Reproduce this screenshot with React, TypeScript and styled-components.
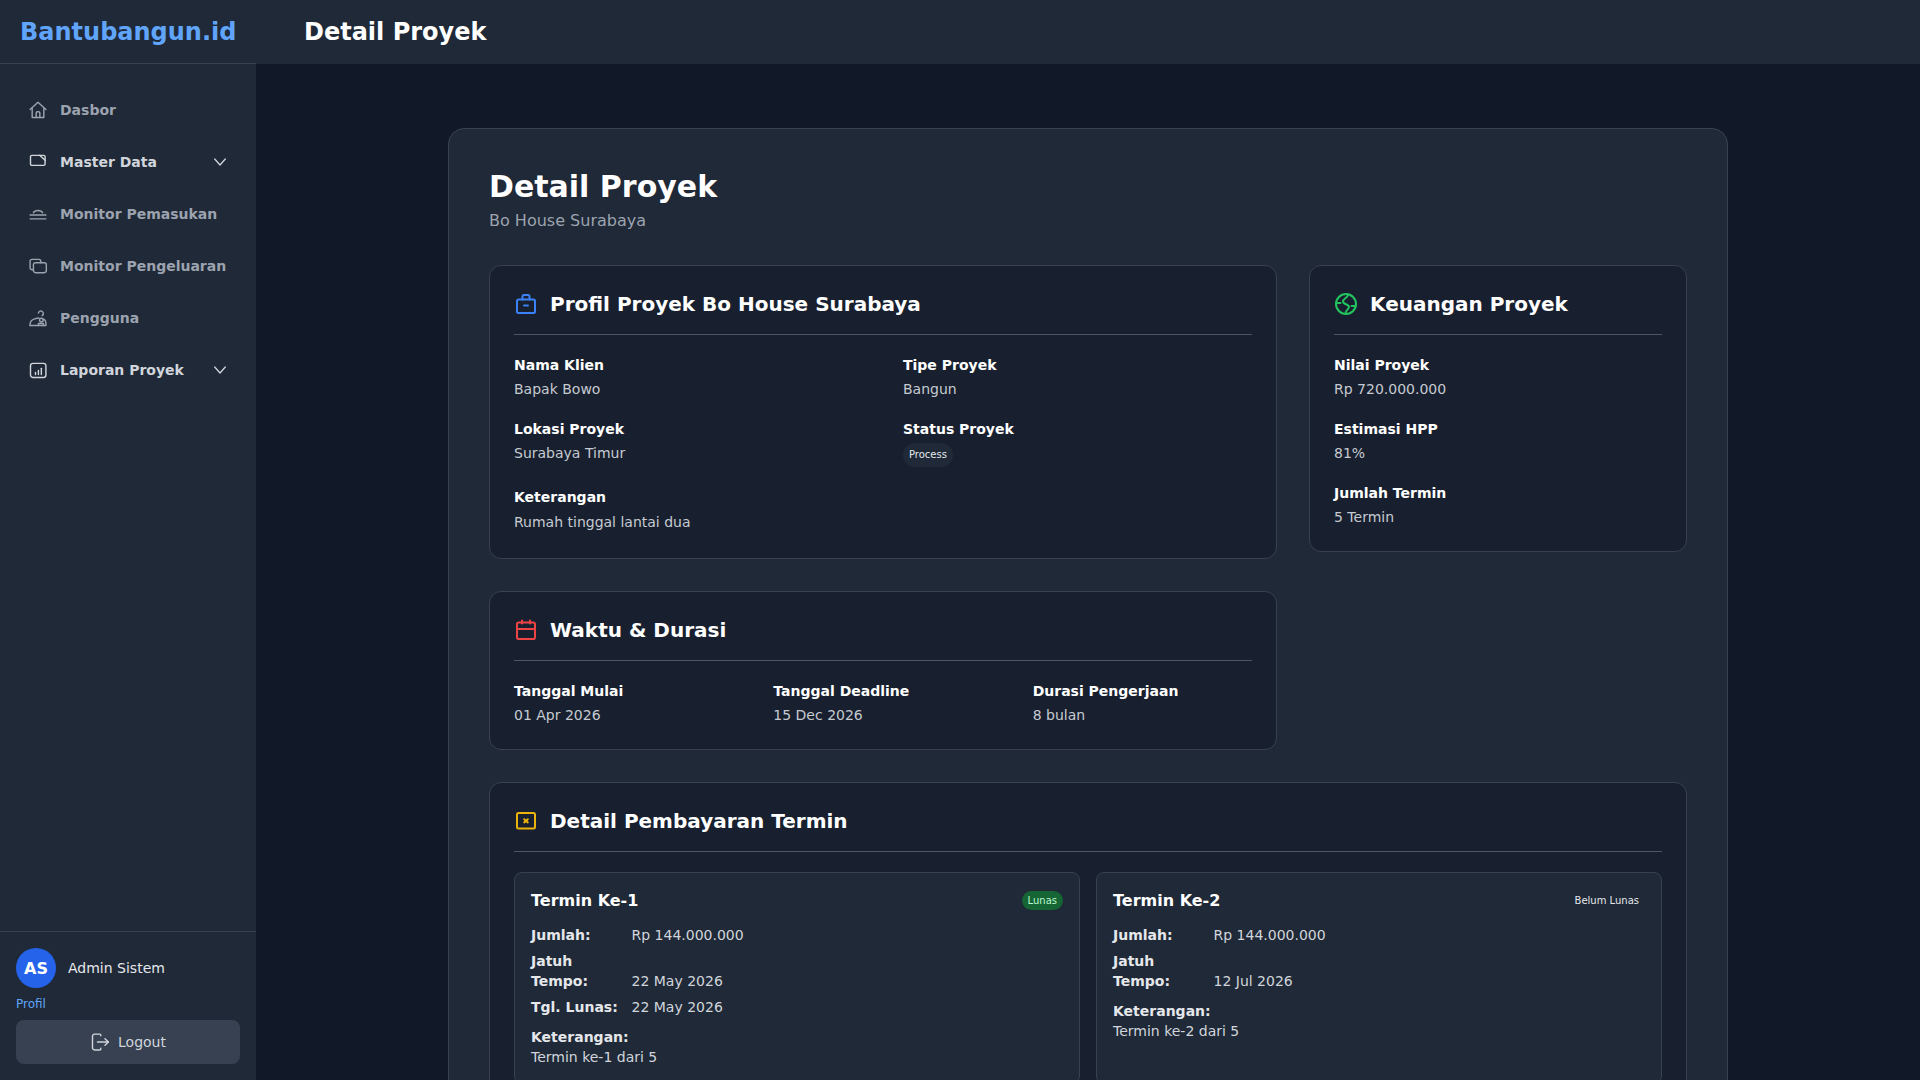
// App.tsx
import React from 'react';
import styled, { createGlobalStyle } from 'styled-components';

const GlobalStyle = createGlobalStyle`
  html, body, #root {
    margin: 0;
    padding: 0;
    height: 100%;
  }
  body {
    background: #111827;
    font-family: "DejaVu Sans", "Liberation Sans", sans-serif;
    overflow: hidden;
  }
  * {
    box-sizing: border-box;
  }
`;

const Shell = styled.div`
  display: flex;
  height: 100vh;
  overflow: hidden;
`;

const Sidebar = styled.aside`
  width: 256px;
  flex-shrink: 0;
  display: flex;
  flex-direction: column;
  background: #1f2937;
`;

const Brand = styled.div`
  height: 64px;
  display: flex;
  align-items: center;
  padding: 0 20px;
  border-bottom: 1px solid #374151;
  color: #60a5fa;
  font-size: 24px;
  font-weight: 700;
`;

const Nav = styled.nav`
  flex: 1;
  display: flex;
  flex-direction: column;
  gap: 8px;
  padding: 24px 16px;
`;

const NavItem = styled.a<{ $open?: boolean }>`
  height: 44px;
  display: flex;
  align-items: center;
  gap: 12px;
  padding: 0 12px;
  border-radius: 8px;
  color: ${(p) => (p.$open ? '#d1d5db' : '#9ca3af')};
  font-size: 14px;
  font-weight: 600;
`;

const NavLabel = styled.span`
  flex: 1;
  white-space: nowrap;
`;

const Glyph = styled.svg<{ $size?: number; $color?: string; $weight?: number }>`
  width: ${(p) => p.$size ?? 20}px;
  height: ${(p) => p.$size ?? 20}px;
  flex-shrink: 0;
  fill: none;
  stroke: ${(p) => p.$color ?? 'currentColor'};
  stroke-width: ${(p) => p.$weight ?? 1.7};
  stroke-linecap: round;
  stroke-linejoin: round;
`;

const UserPanel = styled.div`
  border-top: 1px solid #374151;
  padding: 16px;
`;

const UserRow = styled.div`
  display: flex;
  align-items: center;
  gap: 12px;
`;

const Avatar = styled.div`
  width: 40px;
  height: 40px;
  border-radius: 50%;
  display: flex;
  align-items: center;
  justify-content: center;
  background: #2563eb;
  color: #fff;
  font-size: 16px;
  font-weight: 700;
`;

const UserName = styled.span`
  color: #e5e7eb;
  font-size: 14px;
`;

const ProfileLink = styled.a`
  display: block;
  margin: 8px 0;
  color: #60a5fa;
  font-size: 12px;
  line-height: 16px;
`;

const LogoutButton = styled.button`
  width: 100%;
  height: 44px;
  display: flex;
  align-items: center;
  justify-content: center;
  gap: 8px;
  border: 0;
  border-radius: 8px;
  background: #374151;
  color: #d1d5db;
  font-family: inherit;
  font-size: 14px;
`;

const Column = styled.div`
  flex: 1;
  min-width: 0;
  display: flex;
  flex-direction: column;
`;

const TopBar = styled.header`
  height: 64px;
  flex-shrink: 0;
  display: flex;
  align-items: center;
  padding: 0 48px;
  background: #1f2937;
  color: #fff;
  font-size: 24px;
  font-weight: 700;
`;

const Main = styled.main`
  flex: 1;
  overflow: hidden;
  padding: 64px 192px;
`;

const PageCard = styled.section`
  border: 1px solid #374151;
  border-radius: 16px;
  background: #1f2937;
  padding: 40px;
`;

const PageTitle = styled.h1`
  margin: 0 0 4px;
  color: #fff;
  font-size: 30px;
  line-height: 36px;
  font-weight: 700;
`;

const PageSubtitle = styled.p`
  margin: 0 0 32px;
  color: #9ca3af;
  font-size: 16px;
  line-height: 24px;
`;

const TopGrid = styled.div`
  display: grid;
  grid-template-columns: repeat(3, 1fr);
  gap: 32px;
  align-items: start;
  margin-bottom: 32px;
`;

const LeftStack = styled.div`
  grid-column: span 2;
  display: flex;
  flex-direction: column;
  gap: 32px;
`;

const Panel = styled.div`
  border: 1px solid #374151;
  border-radius: 12px;
  background: #18202f;
  padding: 24px;
`;

const PanelHeader = styled.div`
  display: flex;
  align-items: center;
  gap: 12px;
  height: 45px;
  padding-bottom: 16px;
  margin-bottom: 20px;
  border-bottom: 1px solid #4b5563;
`;

const PanelTitle = styled.h2`
  margin: 0;
  color: #fff;
  font-size: 20px;
  line-height: 28px;
  font-weight: 600;
`;

const FieldGrid = styled.div<{ $cols: number }>`
  display: grid;
  grid-template-columns: repeat(${(p) => p.$cols}, 1fr);
  gap: 20px 40px;
`;

const Field = styled.div<{ $wide?: boolean }>`
  ${(p) => (p.$wide ? 'grid-column: 1 / -1;' : '')}
`;

const FieldLabel = styled.div`
  margin-bottom: 4px;
  color: #fff;
  font-size: 14px;
  line-height: 20px;
  font-weight: 600;
`;

const FieldValue = styled.div`
  color: #c6cad1;
  font-size: 14px;
  line-height: 20px;
`;

const FieldNote = styled.p`
  margin: 0;
  color: #c6cad1;
  font-size: 14px;
  line-height: 22.75px;
`;

const StatusPill = styled.span`
  display: flex;
  width: fit-content;
  align-items: center;
  height: 24px;
  padding: 0 6px 2px;
  border-radius: 12px;
  background: #1f2937;
  color: #e5e7eb;
  font-size: 10px;
`;

const TerminGrid = styled.div`
  display: grid;
  grid-template-columns: repeat(2, 1fr);
  gap: 16px;
`;

const TerminCard = styled.article`
  border: 1px solid #374151;
  border-radius: 8px;
  background: #1f2937;
  padding: 16px;
`;

const TerminHead = styled.div`
  display: flex;
  align-items: center;
  justify-content: space-between;
  margin-bottom: 12px;
`;

const TerminTitle = styled.h3`
  margin: 0;
  color: #fff;
  font-size: 16px;
  line-height: 24px;
  font-weight: 600;
`;

const Badge = styled.span<{ $paid?: boolean }>`
  padding: 2px 6px;
  border-radius: 10px;
  background: ${(p) => (p.$paid ? '#166534' : 'transparent')};
  color: ${(p) => (p.$paid ? '#bbf7d0' : '#e5e7eb')};
  font-size: 10px;
  line-height: 15px;
`;

const TerminRows = styled.div`
  display: flex;
  flex-direction: column;
  gap: 6px;
`;

const TerminRow = styled.div`
  display: flex;
  align-items: flex-end;
  gap: 8px;
  font-size: 14px;
  line-height: 20px;
`;

const TerminKey = styled.span`
  width: 92.5px;
  flex-shrink: 0;
  color: #e5e7eb;
  font-weight: 600;
`;

const TerminVal = styled.span`
  color: #d1d5db;
`;

const TerminNote = styled.div`
  margin-top: 10px;
  font-size: 14px;
  line-height: 20px;
  color: #d1d5db;
`;

const TerminNoteKey = styled.div`
  color: #e5e7eb;
  font-weight: 600;
`;

const IconChevron = () => (
  <Glyph $size={16} $weight={1.3} viewBox="0 0 16 16">
    <path d="M2.7 5l5.3 6 5.3-6" />
  </Glyph>
);

const IconHome = () => (
  <Glyph viewBox="0 0 24 24">
    <path d="M2.5 11.5L12 2.8l9.5 8.7" />
    <path d="M5 9.5V21h14V9.5" />
    <path d="M9.8 21v-5.5a1.5 1.5 0 0 1 1.5-1.5h1.4a1.5 1.5 0 0 1 1.5 1.5V21" />
  </Glyph>
);

const IconFolder = () => (
  <Glyph viewBox="0 0 24 24">
    <rect x="3" y="4" width="17.5" height="12" rx="1.6" />
    <path d="M14 4l6.5 6" />
  </Glyph>
);

const IconIncome = () => (
  <Glyph viewBox="0 0 24 24">
    <path d="M6.5 10.5C8 7 16 7 17.5 10.5" />
    <path d="M2.5 13.2h19" />
    <path d="M2.5 17.8h19" />
  </Glyph>
);

const IconCards = () => (
  <Glyph viewBox="0 0 24 24">
    <path d="M6 16.5H5a2.5 2.5 0 0 1-2.5-2.5V6.5A2.5 2.5 0 0 1 5 4h8a2.5 2.5 0 0 1 2.5 2.5V8" />
    <rect x="6.5" y="8" width="15.5" height="12" rx="2.5" />
  </Glyph>
);

const IconUsers = () => (
  <Glyph viewBox="0 0 24 24">
    <path d="M12.5 6a3 3 0 1 1 4.5 3.2" />
    <path d="M2.5 21v-1.5c0-3 2.5-5.5 5.5-6.5 2 -.7 3.5-1 5-1" />
    <path d="M2.5 21h19v-2.5c0-3-1.5-5-4-5.5" />
    <circle cx="16" cy="14.5" r="2.2" />
    <path d="M12.5 21v-2.5h6V21" />
  </Glyph>
);

const IconReport = () => (
  <Glyph viewBox="0 0 24 24">
    <rect x="3" y="4" width="18.5" height="17" rx="3" />
    <path d="M9 17.5v-2.5" />
    <path d="M12.5 17.5v-5" />
    <path d="M16 17.5V10" />
  </Glyph>
);

const IconLogout = () => (
  <Glyph viewBox="0 0 24 24">
    <path d="M13 4.5V4a1.5 1.5 0 0 0-1.5-1.5h-6A2.5 2.5 0 0 0 3 5v14a2.5 2.5 0 0 0 2.5 2.5h6A1.5 1.5 0 0 0 13 20v-.5" />
    <path d="M9 12h13" />
    <path d="M18 8l4 4-4 4" />
  </Glyph>
);

const IconBriefcase = () => (
  <Glyph $size={24} $color="#3b82f6" $weight={2} viewBox="0 0 24 24">
    <rect x="3" y="7.5" width="18" height="13.5" rx="1.5" />
    <path d="M8.5 7.5V4.5a1.5 1.5 0 0 1 1.5-1.5h4a1.5 1.5 0 0 1 1.5 1.5v3" />
    <path d="M10 13.5h4" />
  </Glyph>
);

const IconGlobe = () => (
  <Glyph $size={24} $color="#22c55e" $weight={2} viewBox="0 0 24 24">
    <circle cx="12" cy="12" r="10" />
    <path d="M14 2.5C14 6 9 6.5 9 9.5c0 3 6 2.5 6 5.5 0 2.5-3.5 3-3.5 6.5" />
    <path d="M2.5 11h4" />
    <path d="M17.5 14h4" />
  </Glyph>
);

const IconCalendar = () => (
  <Glyph $size={24} $color="#ef4444" $weight={2} viewBox="0 0 24 24">
    <rect x="3" y="4.5" width="18" height="16.5" rx="1.8" />
    <path d="M8 2.5v3" />
    <path d="M16 2.5v3" />
    <path d="M3 11h18" />
  </Glyph>
);

const IconReceipt = () => (
  <Glyph $size={24} $color="#eab308" $weight={2} viewBox="0 0 24 24">
    <rect x="3" y="4" width="18" height="15.5" rx="1.5" />
    <path d="M10.2 10.2l3.6 3.2" />
    <path d="M13.8 10.2l-3.6 3.2" />
  </Glyph>
);

const menu = [
  { label: 'Dasbor', icon: <IconHome /> },
  { label: 'Master Data', icon: <IconFolder />, open: true },
  { label: 'Monitor Pemasukan', icon: <IconIncome /> },
  { label: 'Monitor Pengeluaran', icon: <IconCards /> },
  { label: 'Pengguna', icon: <IconUsers /> },
  { label: 'Laporan Proyek', icon: <IconReport />, open: true },
];

const App: React.FC = () => {
  return (
    <Shell>
      <GlobalStyle />
      <Sidebar>
        <Brand>Bantubangun.id</Brand>
        <Nav>
          {menu.map((item) => (
            <NavItem key={item.label} $open={item.open}>
              {item.icon}
              <NavLabel>{item.label}</NavLabel>
              {item.open && <IconChevron />}
            </NavItem>
          ))}
        </Nav>
        <UserPanel>
          <UserRow>
            <Avatar>AS</Avatar>
            <UserName>Admin Sistem</UserName>
          </UserRow>
          <ProfileLink>Profil</ProfileLink>
          <LogoutButton>
            <IconLogout />
            Logout
          </LogoutButton>
        </UserPanel>
      </Sidebar>

      <Column>
        <TopBar>Detail Proyek</TopBar>
        <Main>
          <PageCard>
            <PageTitle>Detail Proyek</PageTitle>
            <PageSubtitle>Bo House Surabaya</PageSubtitle>

            <TopGrid>
              <LeftStack>
                <Panel>
                  <PanelHeader>
                    <IconBriefcase />
                    <PanelTitle>Profil Proyek Bo House Surabaya</PanelTitle>
                  </PanelHeader>
                  <FieldGrid $cols={2}>
                    <Field>
                      <FieldLabel>Nama Klien</FieldLabel>
                      <FieldValue>Bapak Bowo</FieldValue>
                    </Field>
                    <Field>
                      <FieldLabel>Tipe Proyek</FieldLabel>
                      <FieldValue>Bangun</FieldValue>
                    </Field>
                    <Field>
                      <FieldLabel>Lokasi Proyek</FieldLabel>
                      <FieldValue>Surabaya Timur</FieldValue>
                    </Field>
                    <Field>
                      <FieldLabel>Status Proyek</FieldLabel>
                      <StatusPill>Process</StatusPill>
                    </Field>
                    <Field $wide>
                      <FieldLabel>Keterangan</FieldLabel>
                      <FieldNote>Rumah tinggal lantai dua</FieldNote>
                    </Field>
                  </FieldGrid>
                </Panel>

                <Panel>
                  <PanelHeader>
                    <IconCalendar />
                    <PanelTitle>Waktu &amp; Durasi</PanelTitle>
                  </PanelHeader>
                  <FieldGrid $cols={3}>
                    <Field>
                      <FieldLabel>Tanggal Mulai</FieldLabel>
                      <FieldValue>01 Apr 2026</FieldValue>
                    </Field>
                    <Field>
                      <FieldLabel>Tanggal Deadline</FieldLabel>
                      <FieldValue>15 Dec 2026</FieldValue>
                    </Field>
                    <Field>
                      <FieldLabel>Durasi Pengerjaan</FieldLabel>
                      <FieldValue>8 bulan</FieldValue>
                    </Field>
                  </FieldGrid>
                </Panel>
              </LeftStack>

              <Panel>
                <PanelHeader>
                  <IconGlobe />
                  <PanelTitle>Keuangan Proyek</PanelTitle>
                </PanelHeader>
                <FieldGrid $cols={1}>
                  <Field>
                    <FieldLabel>Nilai Proyek</FieldLabel>
                    <FieldValue>Rp 720.000.000</FieldValue>
                  </Field>
                  <Field>
                    <FieldLabel>Estimasi HPP</FieldLabel>
                    <FieldValue>81%</FieldValue>
                  </Field>
                  <Field>
                    <FieldLabel>Jumlah Termin</FieldLabel>
                    <FieldValue>5 Termin</FieldValue>
                  </Field>
                </FieldGrid>
              </Panel>
            </TopGrid>

            <Panel>
              <PanelHeader>
                <IconReceipt />
                <PanelTitle>Detail Pembayaran Termin</PanelTitle>
              </PanelHeader>
              <TerminGrid>
                <TerminCard>
                  <TerminHead>
                    <TerminTitle>Termin Ke-1</TerminTitle>
                    <Badge $paid>Lunas</Badge>
                  </TerminHead>
                  <TerminRows>
                    <TerminRow>
                      <TerminKey>Jumlah:</TerminKey>
                      <TerminVal>Rp 144.000.000</TerminVal>
                    </TerminRow>
                    <TerminRow>
                      <TerminKey>Jatuh Tempo:</TerminKey>
                      <TerminVal>22 May 2026</TerminVal>
                    </TerminRow>
                    <TerminRow>
                      <TerminKey>Tgl. Lunas:</TerminKey>
                      <TerminVal>22 May 2026</TerminVal>
                    </TerminRow>
                  </TerminRows>
                  <TerminNote>
                    <TerminNoteKey>Keterangan:</TerminNoteKey>
                    Termin ke-1 dari 5
                  </TerminNote>
                </TerminCard>

                <TerminCard>
                  <TerminHead>
                    <TerminTitle>Termin Ke-2</TerminTitle>
                    <Badge>Belum Lunas</Badge>
                  </TerminHead>
                  <TerminRows>
                    <TerminRow>
                      <TerminKey>Jumlah:</TerminKey>
                      <TerminVal>Rp 144.000.000</TerminVal>
                    </TerminRow>
                    <TerminRow>
                      <TerminKey>Jatuh Tempo:</TerminKey>
                      <TerminVal>12 Jul 2026</TerminVal>
                    </TerminRow>
                  </TerminRows>
                  <TerminNote>
                    <TerminNoteKey>Keterangan:</TerminNoteKey>
                    Termin ke-2 dari 5
                  </TerminNote>
                </TerminCard>
              </TerminGrid>
            </Panel>
          </PageCard>
        </Main>
      </Column>
    </Shell>
  );
};

export default App;
